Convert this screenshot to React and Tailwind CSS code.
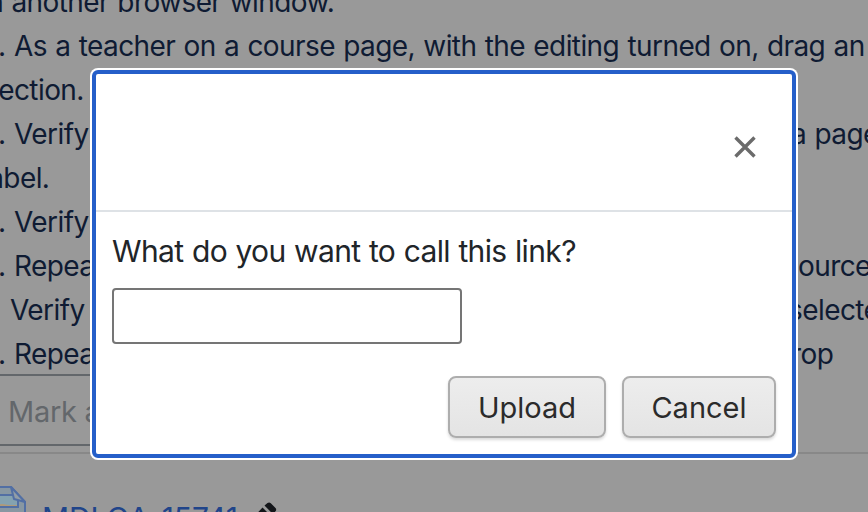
const lines = [
  { marker: "", left: "in another browser window.", pad: "-ml-[19px]", gap: "w-[500px]" },
  { marker: ".", left: "As a teacher on a course page, with the editing turned on, drag an", pad: "-ml-0.5", gap: "w-[900px]" },
  { marker: "", left: "section.", pad: "-ml-4", gap: "w-[500px]" },
  { marker: ".", left: "Verify", pad: "-ml-0.5", gap: "w-[777px]", right: "a page" },
  { marker: "", left: "label.", pad: "-ml-[18px]", gap: "w-[500px]" },
  { marker: ".", left: "Verify", pad: "-ml-0.5", gap: "w-[777px]" },
  { marker: ".", left: "Repeat", pad: "-ml-0.5", gap: "w-[784px]", right: "ource" },
  { marker: "", left: "Verify", pad: "ml-2.5", gap: "w-[778px]", right: "selected" },
  { marker: ".", left: "Repeat", pad: "-ml-0.5", gap: "w-[777px]", right: "rop" },
];

function CourseLine({ line }) {
  return (
    <div
      className={`flex h-11 text-[28px] leading-[44px] tracking-[-0.58px] [word-spacing:1px] whitespace-pre text-[#0f1b33] ${line.pad}`}
    >
      {line.marker && <span className="w-4 shrink-0">{line.marker}</span>}
      <span className={`shrink-0 ${line.gap}`}>{line.left}</span>
      {line.right && <span className="shrink-0">{line.right}</span>}
    </div>
  );
}

function PageIcon() {
  return (
    <svg width="32" height="32" viewBox="0 0 32 32" className="-ml-1.5 shrink-0">
      <path d="M1 1h16l14 15v17H1z" fill="#8897a2" stroke="#526fa4" strokeWidth="2" strokeLinejoin="round" />
      <path d="M2 9h22v12H2z" fill="#84a2b0" stroke="#526fa4" strokeWidth="2" />
      <path d="M2 19l6-1 7 1h8v1H2z" fill="#b09a78" />
      <path d="M17 1l3 12 11 3z" fill="#929da6" stroke="#526fa4" strokeWidth="2" strokeLinejoin="round" />
    </svg>
  );
}

function PencilIcon() {
  return (
    <svg width="28" height="28" viewBox="0 0 28 28" className="shrink-0">
      <path d="M15.500 3.500l3-2.500q1.800-1.200 3.300 0.300l4.700 4.700q1.400 1.700 0 3.300l-2.700 2.700z" fill="#131519" />
      <path d="M13.500 5.500l8.500 8.500L9 27H1v-8z" fill="#131519" />
    </svg>
  );
}

function ModalButton({ children, className }) {
  return (
    <button
      className={`h-[62px] rounded-lg border-2 border-[#adadad] bg-linear-to-b from-[#ededed] to-[#e4e4e4] pt-0.5 text-[29px] text-[#2b2b2b] shadow-[0_2px_3px_rgba(0,0,0,0.15)] ${className}`}
    >
      {children}
    </button>
  );
}

function UploadDialog() {
  return (
    <div className="absolute left-[90px] top-[68px] h-[392px] w-[708px] rounded-lg bg-white p-0.5">
      <div className="flex h-full flex-col rounded-md border-4 border-[#255fc9]">
        <div className="flex h-[138px] shrink-0 items-center justify-end border-b-2 border-[#dee2e6] pt-2.5 pr-9">
          <button aria-label="Close">
            <svg width="22" height="22" viewBox="0 0 22 22" stroke="#6b6b6b" strokeWidth="3.400">
              <path d="M1.500 1.500l19 19M20.500 1.500l-19 19" />
            </svg>
          </button>
        </div>
        <div className="px-4 pt-[15px]">
          <label
            htmlFor="link-name"
            className="block text-[30px] leading-12 tracking-[-0.64px] [word-spacing:0.7px] whitespace-nowrap text-[#212529]"
          >
            What do you want to call this link?
          </label>
          <input
            id="link-name"
            className="mt-[13px] block h-14 w-[350px] rounded-[4px] border-2 border-[#757575] bg-white px-2 text-[28px]"
          />
        </div>
        <div className="flex justify-end gap-4 px-4 pt-8">
          <ModalButton className="w-[158px]">Upload</ModalButton>
          <ModalButton className="w-[154px]">Cancel</ModalButton>
        </div>
      </div>
    </div>
  );
}

export default function App() {
  return (
    <div className="relative h-[512px] w-[868px] overflow-hidden bg-[#999999] font-['Inter',sans-serif]">
      <div className="-mt-5">
        {lines.map((line, i) => (
          <CourseLine key={i} line={line} />
        ))}
      </div>
      <div className="-mt-0.5 flex h-[72px] w-[300px] items-center border-y-2 border-[#63676b] pt-[3px] pl-2 text-[29px] tracking-[-0.3px] whitespace-nowrap text-[#63676b]">
        Mark as done
      </div>
      <div className="mt-1.5 h-0.5 bg-[#888888]" />
      <div className="flex items-start pt-8">
        <PageIcon />
        <span className="mt-3 ml-4 w-[199px] shrink-0 text-[30px] leading-10 tracking-[-0.1px] whitespace-nowrap text-[#20448a]">
          MDLQA-15741
        </span>
        <span className="mt-4 ml-2">
          <PencilIcon />
        </span>
      </div>
      <UploadDialog />
    </div>
  );
}
